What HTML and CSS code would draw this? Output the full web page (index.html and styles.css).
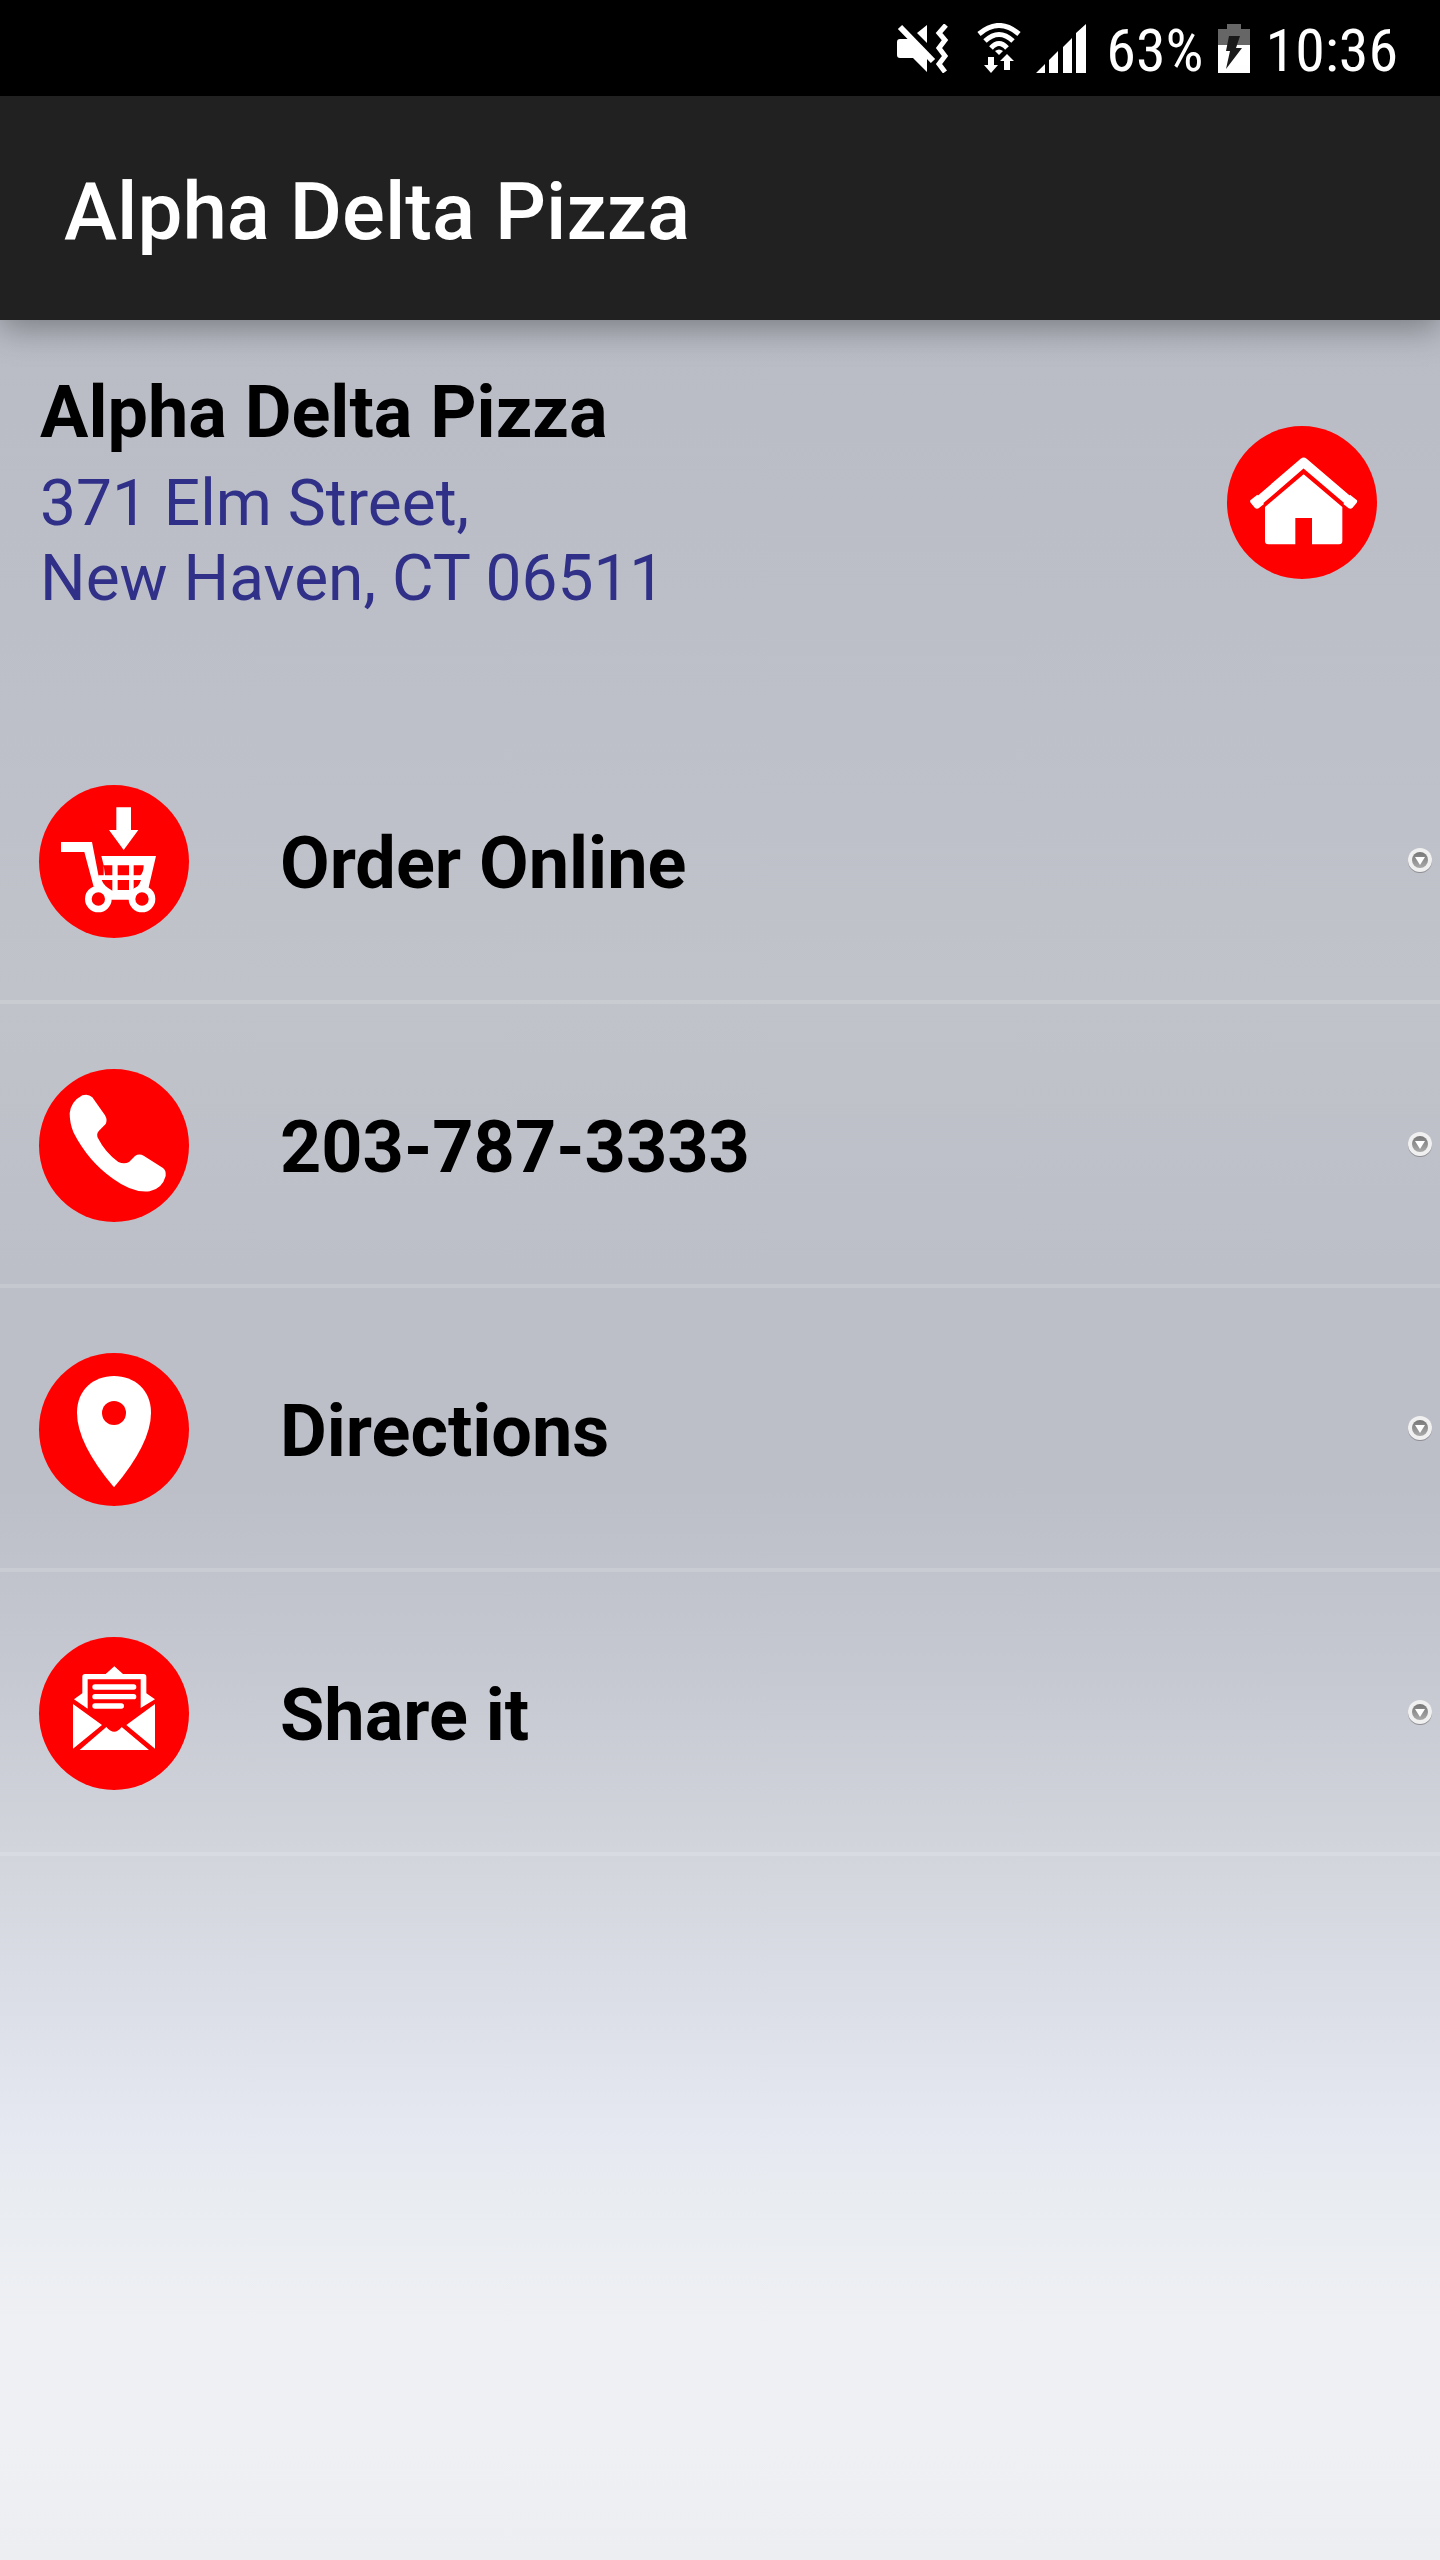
FILE: index.html
```
<!DOCTYPE html>
<html lang="en">
<head>
  <meta charset="UTF-8" />
  <meta name="viewport" content="width=device-width, initial-scale=1" />
  <title>Alpha Delta Pizza</title>
  <link rel="stylesheet" href="styles.css">
</head>
<body>
  <!-- Status bar -->
  <div class="status-bar">
    <svg class="mute-icon" viewBox="0 0 52 49" width="52" height="49" aria-label="Vibrate">
      <path d="M3 15h9L30 34v14L16 34H3q-3 0-3-3V18q0-3 3-3z" fill="#fff" />
      <path d="M30 1v18l-10-10z" fill="#fff" />
      <path d="M3 3l33 34" stroke="#fff" stroke-width="6" />
      <path d="M49 1l-7 8 6 7-6 8 6 8-6 8 6 8" fill="none" stroke="#fff" stroke-width="5" />
    </svg>
    <svg class="wifi-icon" viewBox="0 0 44 50" width="44" height="50" aria-label="Wi-Fi">
      <g fill="none" stroke="#fff" stroke-width="5">
        <path d="M2 11Q22-6 42 11" />
        <path d="M8 18Q22 5 36 18" />
        <path d="M14 25Q22 16 30 25" />
      </g>
      <path d="M18 28q4-3 8 0l-4 4z" fill="#fff" />
      <path d="M11 34h6v8h4l-7 8-7-8h4zM27 47V38h-4l7-7 7 7h-4v9z" fill="#fff" />
    </svg>
    <svg class="signal-icon" viewBox="0 0 50 49" width="50" height="49" aria-label="Signal">
      <path d="M0 49l9-9v9zM13 49V36l9-9v22zM27 49V23l9-9v35zM40 49V9l10-9v49z" fill="#fff" />
    </svg>
    <span class="battery-level">63%</span>
    <svg class="battery-icon" viewBox="0 0 32 49" width="32" height="49" aria-label="Charging">
      <path d="M9 0h14v5h9v16H0V5h9z" fill="#666" />
      <path d="M0 21h32v28H0z" fill="#fff" />
      <path d="M11 12h11l-4 12h6L8 45l4-18H8z" fill="#1a1a1a" />
    </svg>
    <span class="clock">10:36</span>
  </div>

  <!-- App bar -->
  <header class="app-bar">
    <h1>Alpha Delta Pizza</h1>
  </header>

  <main>
    <!-- Restaurant info -->
    <section class="info">
      <div>
        <h2>Alpha Delta Pizza</h2>
        <address>371 Elm Street,<br />New Haven, CT 06511</address>
      </div>
      <button class="home" aria-label="Home">
        <svg class="icon" viewBox="83 75 448 459">
          <path d="M170 306L312 184L455 306" fill="none" stroke="#fff" stroke-width="28" stroke-linejoin="round" />
          <path d="M152 298q-2 4 2 9l12 14q5 4 11 1l16-13-20-28zM472 298q2 4-2 9l-12 14q-5 4-11 1l-16-13 20-28z" fill="#fff" />
          <path d="M312 220L428 318V420q0 10-10 10H337V351H287V430H206q-10 0-10-10V318z" fill="#fff" />
        </svg>
      </button>
    </section>

    <!-- Actions -->
    <nav class="actions">
      <a href="#order">
        <svg class="icon" viewBox="59 45 448 459">
          <path d="M290 112h44v68h22l-44 60-44-60h22z" fill="#fff" />
          <path d="M124 216H217L243 350H222L194 246H124z" fill="#fff" />
          <path fill-rule="evenodd" fill="#fff" d="M245 258H409L386 356L330 389H275L232 350L236 316H256L252 286zM252 286v30h26v-30zM294 286v30h34v-30zM342 286v30h20q10-8 10-30zM246 330q6 18 32 32v-32zM294 330v30h34v-30zM342 330v28q16-8 22-28z" />
          <circle cx="236" cy="387" r="30" fill="#f00" stroke="#fff" stroke-width="20" />
          <circle cx="367" cy="387" r="30" fill="#f00" stroke="#fff" stroke-width="20" />
        </svg>
        <span>Order Online</span>
        <svg class="more" viewBox="0 0 26 26"><use href="#more" /></svg>
      </a>
      <a href="tel:203-787-3333">
        <svg class="icon" viewBox="59 57 448 459">
          <path d="M188 136Q206 130 218 142L256 196Q264 210 258 222L238 242Q228 252 236 266Q256 306 296 336Q314 344 328 336L346 318Q358 310 372 317L430 354Q440 362 438 378Q428 416 390 424Q340 430 280 386Q206 334 162 248Q150 222 150 190Q154 154 188 136z" fill="#fff" />
        </svg>
        <span>203-787-3333</span>
        <svg class="more" viewBox="0 0 26 26"><use href="#more" /></svg>
      </a>
      <a href="#directions">
        <svg class="icon" viewBox="59 69 448 459">
          <path d="M283 472Q172 340 172 248C172 180 222 138 283 138S394 180 394 248Q394 340 283 472z" fill="#fff" />
          <circle cx="283" cy="249" r="36" fill="#f00" />
        </svg>
        <span>Directions</span>
        <svg class="more" viewBox="0 0 26 26"><use href="#more" /></svg>
      </a>
      <a href="#share">
        <svg class="icon" viewBox="59 51 448 459">
          <path d="M160 252L247 315L160 386zM406 252L320 315L406 386zM180 390L260 321Q284 350 306 321L388 390z" fill="#fff" />
          <path d="M163 238L188 220V170q0-8 8-8H258L284 139L310 162H372q8 0 8 8V220L406 238L363 264V178H204V266z" fill="#fff" />
          <path d="M226 201H342M226 230H342M226 258H305" stroke="#fff" stroke-width="16" stroke-linecap="round" />
        </svg>
        <span>Share it</span>
        <svg class="more" viewBox="0 0 26 26"><use href="#more" /></svg>
      </a>
    </nav>
  </main>

  <!-- Shared row indicator -->
  <svg width="0" height="0" class="defs" aria-hidden="true">
    <defs>
      <linearGradient id="dot" x1="0" y1="0" x2="0" y2="1">
        <stop offset="0" stop-color="#777" />
        <stop offset="1" stop-color="#aaa" />
      </linearGradient>
    </defs>
    <symbol id="more" viewBox="0 0 26 26">
      <circle cx="13" cy="13" r="12" fill="#8d8d92" />
      <circle cx="13" cy="12" r="12" fill="#f0f0f0" />
      <circle cx="13" cy="12" r="8" fill="url(#dot)" />
      <path d="M8 9h10l-5 8z" fill="#fff" />
    </symbol>
  </svg>
</body>
</html>
```

FILE: styles.css
```
* {
  margin: 0;
  padding: 0;
  box-sizing: border-box;
}
body {
  font-family: Roboto, sans-serif;
  min-height: 100vh;
  background: linear-gradient(
    to bottom,
    #b9bcc5 12%,
    #bdc0c9 28%,
    #c0c3c9 39%,
    #bcbfc8 50%,
    #bdbfc8 58%,
    #c5c8d0 65%,
    #d3d6dd 73%,
    #dbdee6 78%,
    #e5e8f1 83%,
    #e9ecf0 86%,
    #eef0f4 91%,
    #eff0f4 95%,
    #edeef2 100%
  );
  color: #000;
}

/* Status bar */
.status-bar {
  display: flex;
  align-items: center;
  justify-content: flex-end;
  height: 96px;
  padding-right: 42px;
  background: #000;
  color: #fff;
  font-family: "Roboto Condensed", "Liberation Sans Narrow", Roboto, sans-serif;
  font-size: 60px;
}
.battery-level,
.clock {
  padding-top: 4px;
}
.mute-icon {
  margin-right: 28px;
}
.wifi-icon {
  margin-right: 15px;
}
.signal-icon {
  margin-right: 20px;
}
.battery-icon {
  margin: 0 16px 0 14px;
}

/* App bar */
.app-bar {
  position: relative;
  display: flex;
  align-items: center;
  height: 224px;
  padding: 8px 64px 0;
  background: #212121;
  box-shadow: 0 8px 32px rgba(0, 0, 0, 0.35);
}
h1 {
  color: #fff;
  font-size: 80px;
  font-weight: 500;
}

/* Restaurant info */
.info {
  display: flex;
  align-items: flex-start;
  justify-content: space-between;
  height: 400px;
  padding: 48px 63px 0 40px;
}
h2 {
  margin-bottom: 8px;
  font-size: 72px;
  font-weight: bold;
  line-height: 90px;
}
address {
  font-size: 64px;
  font-style: normal;
  line-height: 75px;
  color: #303088;
}
.home {
  margin-top: 58px;
  border: none;
  background: none;
  cursor: pointer;
}
.icon {
  display: block;
  flex: none;
  width: 150px;
  height: 153px;
  border-radius: 50%;
  background: #f00;
}

/* Actions */
.actions a {
  display: flex;
  align-items: center;
  height: 284px;
  padding: 2px 7px 0 39px;
  border-bottom: 4px solid rgba(255, 255, 255, 0.15);
  color: #000;
  text-decoration: none;
}
.actions span {
  flex: 1;
  padding: 4px 0 0 91px;
  font-size: 72px;
  font-weight: bold;
}
.more {
  width: 26px;
  height: 26px;
}
.defs {
  position: absolute;
}
```
